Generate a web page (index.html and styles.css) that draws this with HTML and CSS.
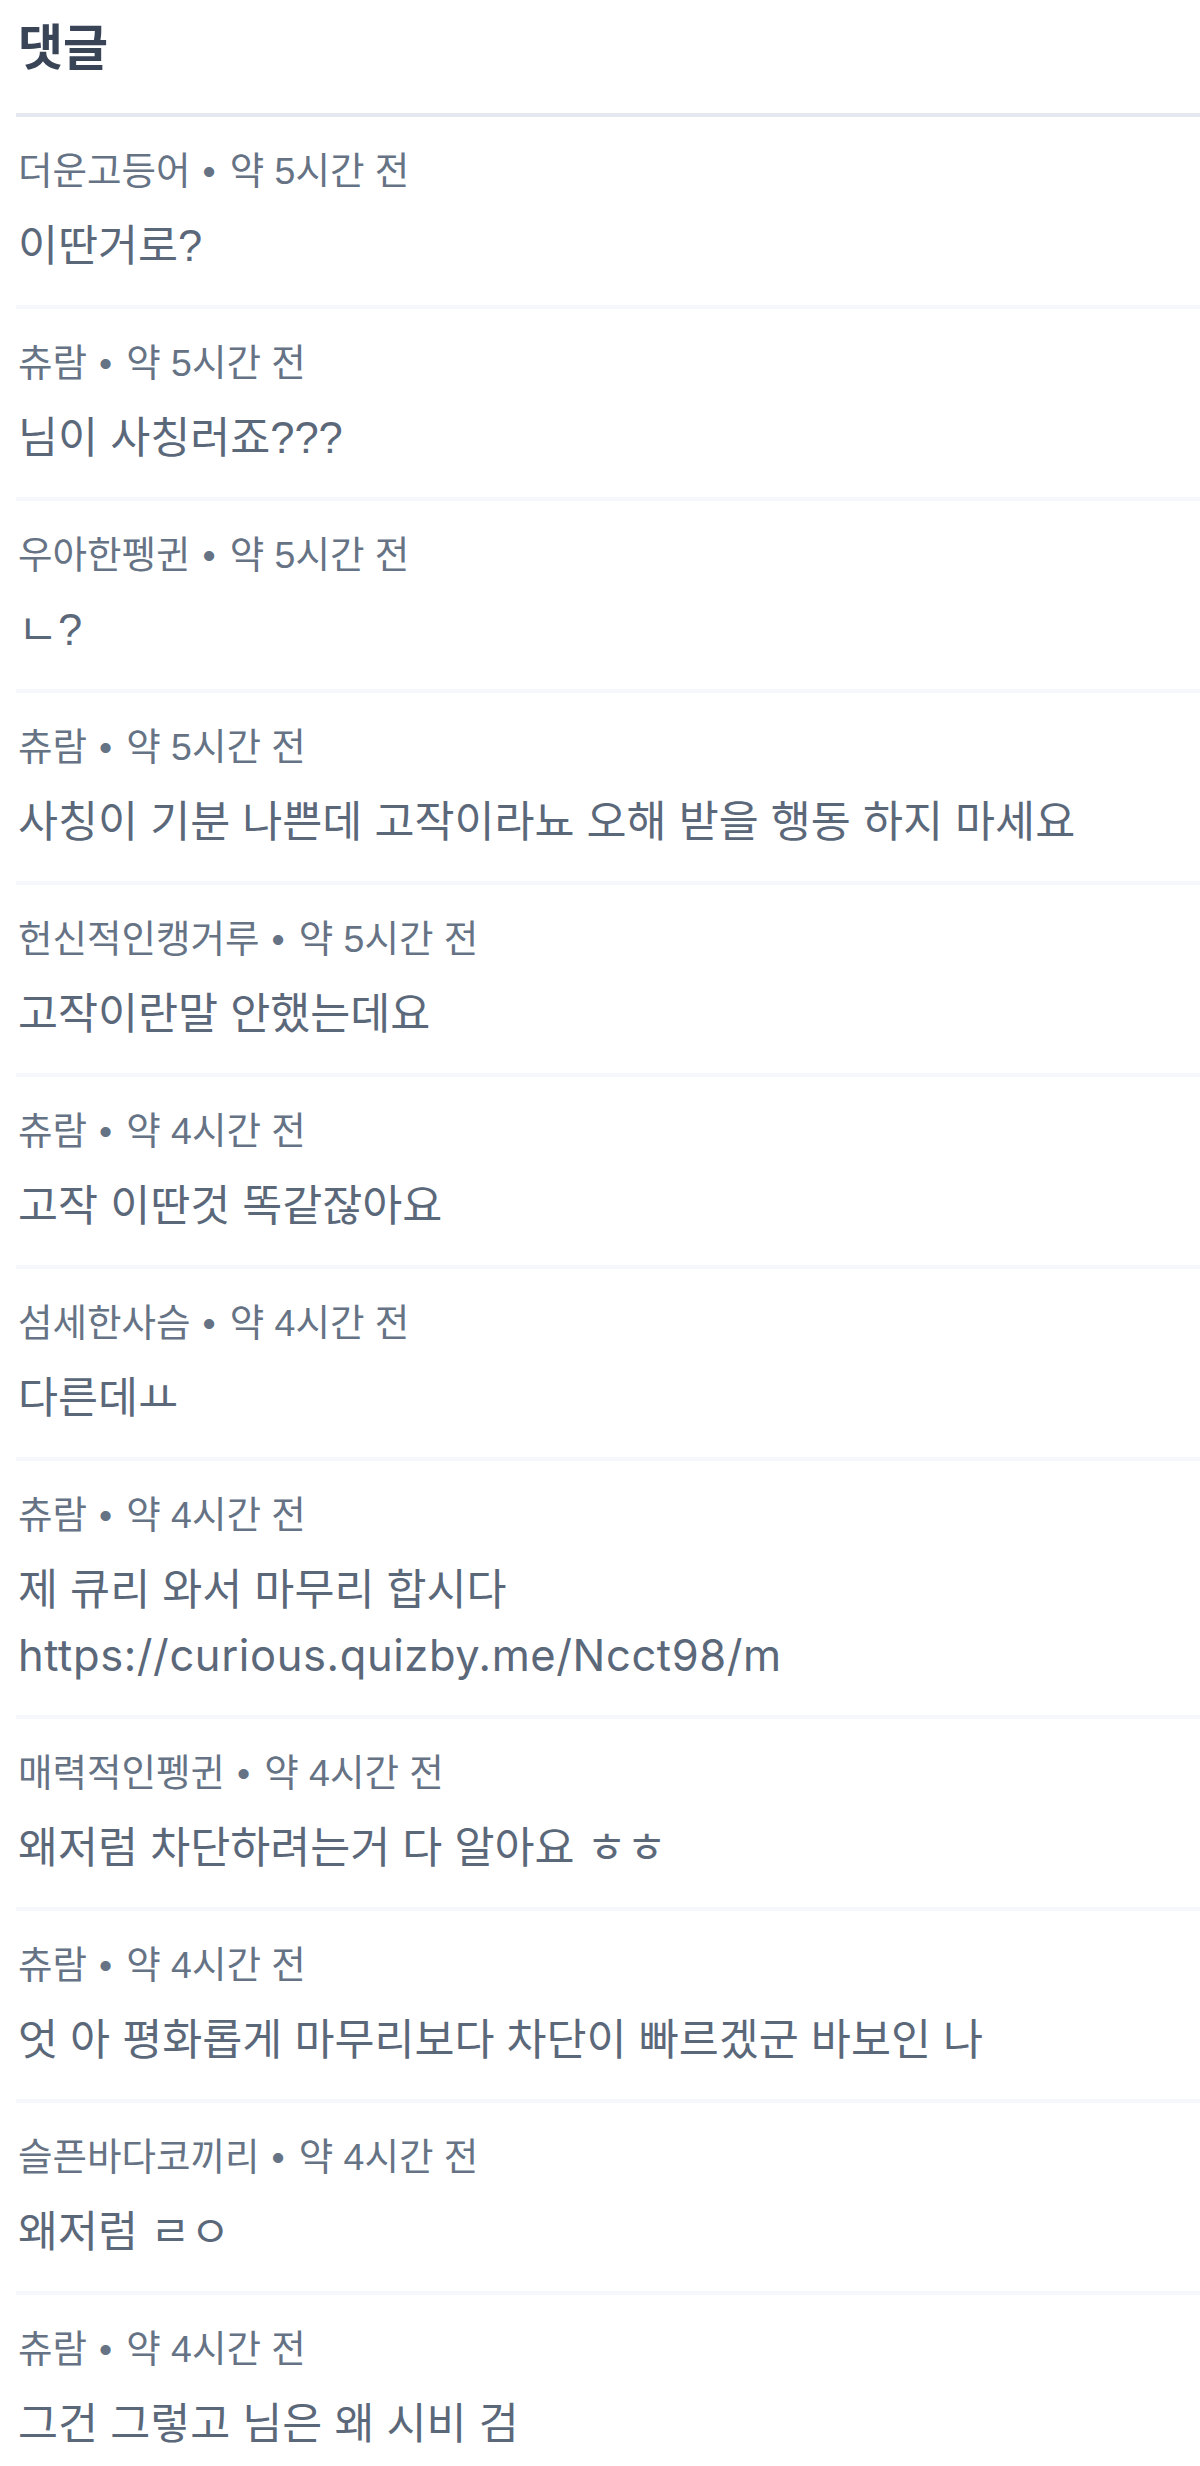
FILE: index.html
```html
<!DOCTYPE html>
<html lang="ko">
<head>
<meta charset="utf-8">
<title>댓글</title>
<link rel="stylesheet" href="styles.css">
</head>
<body>
<section class="comments">
  <h2 class="comments-title">댓글</h2>
  <ul class="comment-list">
    <li class="comment">
      <div class="meta">더운고등어<span class="dot">•</span>약 5시간 전</div>
      <p class="body">이딴거로?</p>
    </li>
    <li class="comment">
      <div class="meta">츄람<span class="dot">•</span>약 5시간 전</div>
      <p class="body">님이 사칭러죠???</p>
    </li>
    <li class="comment">
      <div class="meta">우아한펭귄<span class="dot">•</span>약 5시간 전</div>
      <p class="body">ㄴ?</p>
    </li>
    <li class="comment">
      <div class="meta">츄람<span class="dot">•</span>약 5시간 전</div>
      <p class="body">사칭이 기분 나쁜데 고작이라뇨 오해 받을 행동 하지 마세요</p>
    </li>
    <li class="comment">
      <div class="meta">헌신적인캥거루<span class="dot">•</span>약 5시간 전</div>
      <p class="body">고작이란말 안했는데요</p>
    </li>
    <li class="comment">
      <div class="meta">츄람<span class="dot">•</span>약 4시간 전</div>
      <p class="body">고작 이딴것 똑같잖아요</p>
    </li>
    <li class="comment">
      <div class="meta">섬세한사슴<span class="dot">•</span>약 4시간 전</div>
      <p class="body">다른데ㅛ</p>
    </li>
    <li class="comment">
      <div class="meta">츄람<span class="dot">•</span>약 4시간 전</div>
      <p class="body">제 큐리 와서 마무리 합시다<br><span class="url">https://curious.quizby.me/Ncct98/m</span></p>
    </li>
    <li class="comment">
      <div class="meta">매력적인펭귄<span class="dot">•</span>약 4시간 전</div>
      <p class="body">왜저럼 차단하려는거 다 알아요 ㅎㅎ</p>
    </li>
    <li class="comment">
      <div class="meta">츄람<span class="dot">•</span>약 4시간 전</div>
      <p class="body">엇 아 평화롭게 마무리보다 차단이 빠르겠군 바보인 나</p>
    </li>
    <li class="comment">
      <div class="meta">슬픈바다코끼리<span class="dot">•</span>약 4시간 전</div>
      <p class="body">왜저럼 ㄹㅇ</p>
    </li>
    <li class="comment">
      <div class="meta">츄람<span class="dot">•</span>약 4시간 전</div>
      <p class="body">그건 그렇고 님은 왜 시비 검</p>
    </li>
  </ul>
</section>
</body>
</html>
```
FILE: styles.css
```css
html, body {
  margin: 0;
  padding: 0;
  background: #ffffff;
}
body {
  font-family: "Liberation Sans", "Noto Sans CJK KR", sans-serif;
  color: #5b687a;
}
.comments {
  padding-left: 16px;
}
.comments-title {
  margin: 0;
  padding: 10px 0 36px 2px;
  font-family: "Noto Sans CJK KR", sans-serif;
  font-size: 49px;
  line-height: 67px;
  font-weight: 700;
  color: #394457;
  border-bottom: 4px solid #e5e9ef;
}
.comment-list {
  list-style: none;
  margin: 0;
  padding: 0;
}
.comment {
  padding: 28px 0 26px 2px;
  border-bottom: 4px solid #f5f7fa;
}
.meta {
  font-size: 37.5px;
  line-height: 53px;
  height: 53px;
  color: #667385;
}
.dot {
  margin: 0 14px 0 12px;
  line-height: 1;
}
.body {
  margin: 16px 0 0;
  font-size: 43.5px;
  line-height: 65px;
  color: #5b687a;
}
.url {
  font-family: "Inter", "Liberation Sans", sans-serif;
  letter-spacing: 0.6px;
}
```
